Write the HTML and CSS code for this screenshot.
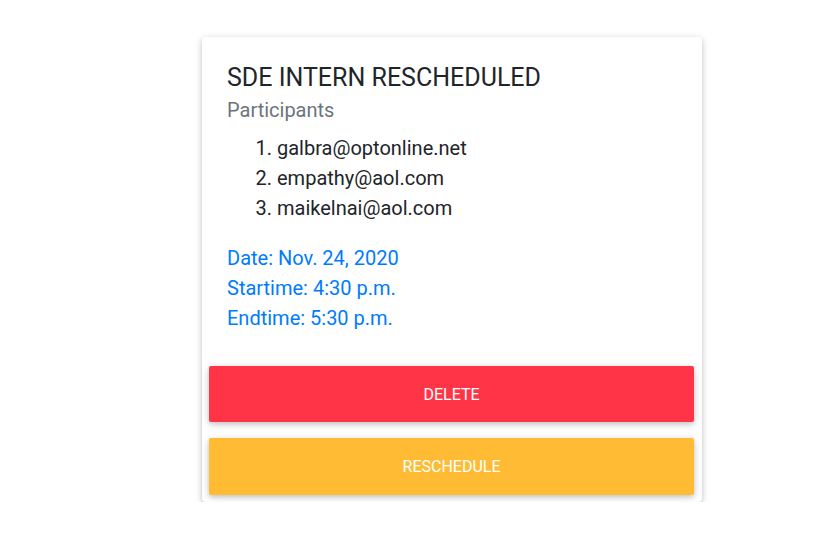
FILE: index.html
```html
<!DOCTYPE html>
<html>
<head>
<meta charset="utf-8">
<link rel="stylesheet" href="styles.css">
</head>
<body>
<div class="page">
  <div class="card">
    <div class="card-body">
      <h4 class="title">SDE INTERN RESCHEDULED</h4>
      <div class="subtitle">Participants</div>
      <ol class="list">
        <li>galbra@optonline.net</li>
        <li>empathy@aol.com</li>
        <li>maikelnai@aol.com</li>
      </ol>
      <div class="info">
        <div>Date: Nov. 24, 2020</div>
        <div>Startime: 4:30 p.m.</div>
        <div>Endtime: 5:30 p.m.</div>
      </div>
    </div>
    <div class="actions">
      <button class="btn btn-danger">DELETE</button>
      <button class="btn btn-warning">RESCHEDULE</button>
    </div>
  </div>
</div>
</body>
</html>
```
FILE: styles.css
```css
html, body {
  margin: 0;
  padding: 0;
  background: #fff;
  font-family: Roboto, "Liberation Sans", sans-serif;
}
.page {
  padding-top: 37px;
  padding-left: 202px;
}
.card {
  width: 500px;
  background: #fff;
  border-radius: 4px;
  box-shadow: 0 2px 5px 0 rgba(0,0,0,.16), 0 2px 10px 0 rgba(0,0,0,.12);
  padding-bottom: 7px;
}
.card-body {
  padding: 26px 25px 33px 25px;
}
.title {
  margin: 0;
  font-size: 25px;
  font-weight: 400;
  line-height: 29px;
  color: #212529;
}
.subtitle {
  font-size: 20px;
  line-height: 30px;
  color: #6c757d;
  margin-top: 3px;
}
.list {
  margin: 8px 0 0 0;
  padding-left: 50px;
  font-size: 20px;
  line-height: 30px;
  color: #212529;
}
.info {
  margin-top: 20px;
  font-size: 20px;
  line-height: 30px;
  color: #007bff;
}
.actions {
  display: flex;
  flex-direction: column;
  gap: 16px;
  padding: 0 8px 0 7px;
}
.btn {
  display: block;
  width: 100%;
  height: 56px;
  border: 0;
  border-radius: 2px;
  color: #fff;
  font-family: Roboto, "Liberation Sans", sans-serif;
  font-size: 16px;
  padding: 0;
  box-shadow: 0 2px 5px 0 rgba(0,0,0,.16), 0 2px 10px 0 rgba(0,0,0,.12);
}
.btn-danger { background: #ff3547; }
.btn-warning { background: #ffbb33; height: 57px; }
```
